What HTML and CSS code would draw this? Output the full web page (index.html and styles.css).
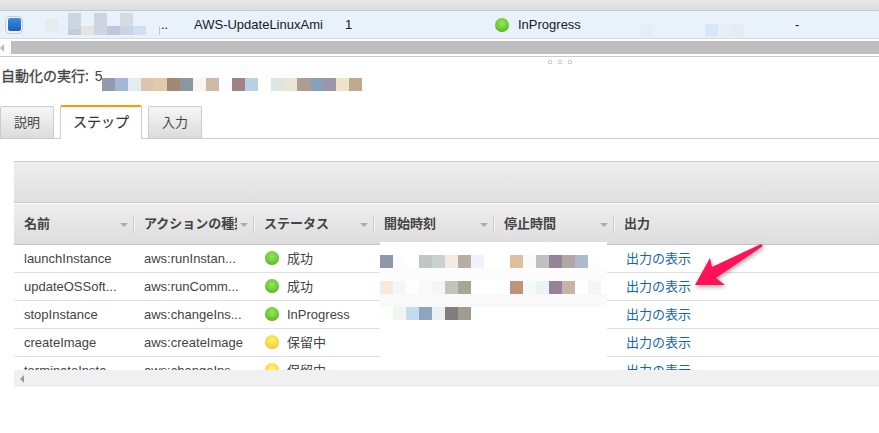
FILE: index.html
```html
<!DOCTYPE html>
<html lang="ja">
<head>
	<meta charset="UTF-8">
	<meta name="viewport" content="width=device-width, initial-scale=1.0">
	<title>自動化の実行</title>
	<link rel="stylesheet" href="styles.css">
</head>
<body>
	<div class="topband"></div>
	<div class="runrow">
		<span class="check"><span class="checkfill"></span></span>
		<span class="runcell runname">..</span>
		<span class="runcell rundoc">AWS-UpdateLinuxAmi</span>
		<span class="runcell runstep">1</span>
		<span class="runcell runstatus"><span class="ball green"></span>InProgress</span>
		<span class="runcell rundash">-</span>
	</div>
	<div class="topscroll">
		<span class="arrowleft"></span>
		<span class="topthumb"></span>
	</div>
	<div class="splitter">
		<span class="grip"></span>
		<span class="grip"></span>
		<span class="grip"></span>
	</div>
	<h2 class="runtitle">自動化の実行: <span class="runid">5</span></h2>
	<div class="tabs">
		<span class="tab">説明</span>
		<span class="tab activetab">ステップ</span>
		<span class="tab">入力</span>
	</div>
	<div class="panel">
		<div class="toolbar"></div>
		<div class="row headrow">
			<div class="headcell">名前<span class="caret"></span></div>
			<div class="headcell"><span class="headclip">アクションの種類</span><span class="caret"></span></div>
			<div class="headcell">ステータス<span class="caret"></span></div>
			<div class="headcell">開始時刻<span class="caret"></span></div>
			<div class="headcell">停止時間<span class="caret"></span></div>
			<div class="headcell lastcell">出力</div>
		</div>
		<div class="rows">
			<div class="row steprow">
				<div class="cell">launchInstance</div>
				<div class="cell">aws:runInstan...</div>
				<div class="cell statuscell"><span class="ball green"></span><span class="jatext">成功</span></div>
				<div class="cell"></div>
				<div class="cell"></div>
				<div class="cell"><a class="outlink" href="#">出力の表示</a></div>
			</div>
			<div class="row steprow">
				<div class="cell">updateOSSoft...</div>
				<div class="cell">aws:runComm...</div>
				<div class="cell statuscell"><span class="ball green"></span><span class="jatext">成功</span></div>
				<div class="cell"></div>
				<div class="cell"></div>
				<div class="cell"><a class="outlink" href="#">出力の表示</a></div>
			</div>
			<div class="row steprow">
				<div class="cell">stopInstance</div>
				<div class="cell">aws:changeIns...</div>
				<div class="cell statuscell"><span class="ball green"></span>InProgress</div>
				<div class="cell"></div>
				<div class="cell"></div>
				<div class="cell"><a class="outlink" href="#">出力の表示</a></div>
			</div>
			<div class="row steprow">
				<div class="cell">createImage</div>
				<div class="cell">aws:createImage</div>
				<div class="cell statuscell"><span class="ball yellow"></span><span class="jatext">保留中</span></div>
				<div class="cell"></div>
				<div class="cell"></div>
				<div class="cell"><a class="outlink" href="#">出力の表示</a></div>
			</div>
			<div class="row steprow">
				<div class="cell">terminateInsta</div>
				<div class="cell">aws:changeIns...</div>
				<div class="cell statuscell"><span class="ball yellow"></span><span class="jatext">保留中</span></div>
				<div class="cell"></div>
				<div class="cell"></div>
				<div class="cell"><a class="outlink" href="#">出力の表示</a></div>
			</div>
		</div>
		<div class="panelscroll"><span class="arrowleft darkarrow"></span></div>
	</div>

	<!-- blurred out values and the red arrow sit over the page -->
	<svg class="overlay" width="879" height="433" viewBox="0 0 879 433">
		<g>
			<rect x="45" y="19" width="13" height="13" fill="#e4ecef"/>
			<rect x="58" y="26" width="10" height="9" fill="#e4f0fb"/>
			<rect x="68" y="13" width="13" height="22" fill="#cdd5e0"/>
			<rect x="68" y="29" width="13" height="6" fill="#c4ccd8"/>
			<rect x="81" y="26" width="13" height="9" fill="#e2e5e2"/>
			<rect x="94" y="13" width="13" height="22" fill="#cdd5e0"/>
			<rect x="107" y="26" width="13" height="9" fill="#c0c5e0"/>
			<rect x="120" y="13" width="13" height="13" fill="#d5dbe5"/>
			<rect x="120" y="26" width="13" height="9" fill="#cdd2dc"/>
			<rect x="133" y="26" width="13" height="9" fill="#cfe0f5"/>
			<rect x="159" y="26" width="1" height="9" fill="#bcc8d8"/>
			<rect x="640" y="24" width="13" height="13" fill="#e5eef8"/>
			<rect x="705" y="24" width="13" height="13" fill="#d5e7f8"/>
			<rect x="718" y="24" width="13" height="13" fill="#e6eff9"/>
			<rect x="731" y="24" width="13" height="13" fill="#e4ecf0"/>
		</g>
		<g>
			<rect x="102" y="65" width="260" height="13" fill="#fdfdfd"/>
			<rect x="102" y="78" width="13" height="13" fill="#9499ae"/>
			<rect x="115" y="78" width="13" height="13" fill="#a3b8d4"/>
			<rect x="128" y="78" width="13" height="13" fill="#e4ecf0"/>
			<rect x="141" y="78" width="13" height="13" fill="#dcc5b0"/>
			<rect x="154" y="78" width="13" height="13" fill="#e4cba8"/>
			<rect x="167" y="78" width="13" height="13" fill="#a38974"/>
			<rect x="180" y="78" width="13" height="13" fill="#8b95a4"/>
			<rect x="193" y="78" width="13" height="13" fill="#fbf5ef"/>
			<rect x="206" y="78" width="13" height="13" fill="#cfb9a7"/>
			<rect x="219" y="78" width="13" height="13" fill="#fafcff"/>
			<rect x="232" y="78" width="13" height="13" fill="#a18385"/>
			<rect x="245" y="78" width="13" height="13" fill="#b8d0e4"/>
			<rect x="258" y="78" width="13" height="13" fill="#fefff9"/>
			<rect x="271" y="78" width="13" height="13" fill="#dde6e3"/>
			<rect x="284" y="78" width="13" height="13" fill="#e9e6d8"/>
			<rect x="297" y="78" width="13" height="13" fill="#b09c92"/>
			<rect x="310" y="78" width="13" height="13" fill="#8a9fb8"/>
			<rect x="323" y="78" width="13" height="13" fill="#9b96a8"/>
			<rect x="336" y="78" width="13" height="13" fill="#f1e3cb"/>
			<rect x="349" y="78" width="13" height="13" fill="#bfaa90"/>
		</g>
		<g>
			<rect x="380" y="242" width="227" height="128" fill="#ffffff"/>
			<rect x="380" y="268" width="227" height="13" fill="#fcfcfc"/>
			<rect x="380" y="294" width="227" height="13" fill="#f9f9f9"/>
			<rect x="380" y="255" width="13" height="13" fill="#8e98a8"/>
			<rect x="393" y="255" width="13" height="13" fill="#f9fdff"/>
			<rect x="419" y="255" width="13" height="13" fill="#c2c4c6"/>
			<rect x="432" y="255" width="13" height="13" fill="#c9d2cf"/>
			<rect x="445" y="255" width="13" height="13" fill="#f3ebe4"/>
			<rect x="458" y="255" width="13" height="13" fill="#b7ada2"/>
			<rect x="471" y="255" width="13" height="13" fill="#eff4fc"/>
			<rect x="510" y="255" width="13" height="13" fill="#dfbf9d"/>
			<rect x="523" y="255" width="13" height="13" fill="#f6fbfe"/>
			<rect x="536" y="255" width="13" height="13" fill="#c0c0c0"/>
			<rect x="549" y="255" width="13" height="13" fill="#938499"/>
			<rect x="562" y="255" width="13" height="13" fill="#b2a6a6"/>
			<rect x="575" y="255" width="13" height="13" fill="#adbccb"/>
			<rect x="588" y="255" width="13" height="13" fill="#fbfdff"/>
			<rect x="380" y="281" width="13" height="13" fill="#f6eadb"/>
			<rect x="393" y="281" width="13" height="13" fill="#f3f7fb"/>
			<rect x="406" y="281" width="13" height="13" fill="#fbffff"/>
			<rect x="419" y="281" width="13" height="13" fill="#f9f9f9"/>
			<rect x="432" y="281" width="13" height="13" fill="#f2f6f9"/>
			<rect x="445" y="281" width="13" height="13" fill="#c6c1ba"/>
			<rect x="458" y="281" width="13" height="13" fill="#a6a697"/>
			<rect x="510" y="281" width="13" height="13" fill="#bd9479"/>
			<rect x="523" y="281" width="13" height="13" fill="#f4f8fb"/>
			<rect x="536" y="281" width="13" height="13" fill="#ebf2f4"/>
			<rect x="549" y="281" width="13" height="13" fill="#938499"/>
			<rect x="562" y="281" width="13" height="13" fill="#c6b4a5"/>
			<rect x="588" y="281" width="13" height="13" fill="#f3f7fb"/>
			<rect x="380" y="307" width="13" height="13" fill="#fdfffd"/>
			<rect x="393" y="307" width="13" height="13" fill="#f0f5ee"/>
			<rect x="406" y="307" width="13" height="13" fill="#c5dcf0"/>
			<rect x="419" y="307" width="13" height="13" fill="#8da5be"/>
			<rect x="432" y="307" width="13" height="13" fill="#ebf1f1"/>
			<rect x="445" y="307" width="13" height="13" fill="#807f7c"/>
			<rect x="458" y="307" width="13" height="13" fill="#a09d90"/>
		</g>
		<polygon class="redarrow" points="761,244 763,246 716,278 725,285 695,285 710,258 712,267" fill="#ff1258"/>
	</svg>
</body>
</html>
```

FILE: styles.css
```css
html, body{
	margin: 0;
	height: 100%;
	overflow: hidden;
	background: #fff;
}
body{
	position: relative;
	font-family: "Liberation Sans", "Noto Sans CJK JP", sans-serif;
	font-size: 13px;
	color: #444;
}

/* selected run at the top */
.topband{
	height: 10px;
	background: linear-gradient(#e6e6e6, #dedede);
	border-bottom: 1px solid #c8c8c8;
}
.runrow{
	display: flex;
	align-items: center;
	height: 27px;
	background: #e9f1fb;
	border-bottom: 1px solid #d8d8d8;
	color: #16191f;
}
.check{
	display: flex;
	align-items: center;
	justify-content: center;
	box-sizing: border-box;
	width: 18px;
	height: 18px;
	margin-left: 5px;
	background: #f4f6f9;
	border: 1px solid #c9c9c9;
	border-radius: 5px;
}
.checkfill{
	width: 13px;
	height: 13px;
	border-radius: 2px;
	background: linear-gradient(#3b8de2, #1b60ba);
}
.runcell{
	display: flex;
	align-items: center;
	flex: none;
}
.runname{
	width: 33px;
	margin-left: 138px;
}
.rundoc{
	width: 151px;
}
.runstep{
	width: 150px;
}
.runstatus{
	width: 300px;
}
.ball{
	flex: none;
	display: inline-block;
	box-sizing: border-box;
	width: 14px;
	height: 14px;
	margin-right: 9px;
	border-radius: 50%;
}
.green{
	background: radial-gradient(circle at 50% 38%, #98e45c 0%, #6ccb33 55%, #339012 100%);
}
.yellow{
	background: radial-gradient(circle at 50% 38%, #fff07a 0%, #ffd83c 55%, #e8960f 100%);
}

.topscroll{
	display: flex;
	align-items: center;
	height: 17px;
	border-bottom: 1px solid #ccc;
}
.topthumb{
	flex: 1;
	height: 13px;
	margin-left: 7px;
	background: #bebebe;
}
.arrowleft{
	width: 0;
	height: 0;
	border-top: 4px solid transparent;
	border-bottom: 4px solid transparent;
	border-right: 4px solid #bbb;
}
.darkarrow{
	border-right-color: #999;
	margin-left: 6px;
}

.splitter{
	display: flex;
	gap: 6px;
	height: 6px;
	padding: 3px 0 0 548px;
}
.grip{
	box-sizing: border-box;
	width: 4px;
	height: 4px;
	border: 1px solid #ccc;
	border-radius: 1px 1px 0 0;
}

.runtitle{
	margin: 0;
	padding-left: 1px;
	height: 20px;
	line-height: 20px;
	font-size: 14px;
	font-weight: normal;
	-webkit-text-stroke: 0.3px #444;
}
.runid{
	margin-left: 2px;
	font-size: 14px;
	-webkit-text-stroke: 0;
}

.tabs{
	display: flex;
	align-items: flex-end;
	gap: 6px;
	height: 33px;
	margin-top: 19px;
	border-bottom: 1px solid #ccc;
}
.tab{
	box-sizing: border-box;
	display: flex;
	align-items: center;
	justify-content: center;
	width: 54px;
	height: 32px;
	padding-bottom: 3px;
	background: linear-gradient(#f6f6f6, #dcdcdc);
	border: 1px solid #ccc;
	border-bottom: 0;
	border-radius: 2px 2px 0 0;
}
.activetab{
	width: 82px;
	height: 34px;
	margin-bottom: -1px;
	padding-bottom: 4px;
	background: #fff;
	border-top: 2px solid #f90;
	font-size: 14px;
	-webkit-text-stroke: 0.2px #333;
	color: #333;
}

.panel{
	margin: 22px 0 0 14px;
}
.toolbar{
	height: 40px;
	background: linear-gradient(#eeeeee, #e0e0e0);
	border-top: 1px solid #ccc;
	border-bottom: 1px solid #ccc;
}
.row{
	display: grid;
	grid-template-columns: repeat(5, 120px) 1fr;
}
.headrow{
	height: 40px;
	background: linear-gradient(#eeeeee, #dddddd);
	border-top: 1px solid #f6f6f6;
	border-bottom: 1px solid #c4c4c4;
}
.headcell{
	position: relative;
	display: flex;
	align-items: center;
	padding: 0 0 3px 10px;
	font-weight: bold;
	white-space: nowrap;
}
.headcell::after{
	content: "";
	position: absolute;
	right: 0;
	top: 11px;
	height: 18px;
	width: 1px;
	background: #ccc;
	box-shadow: 1px 0 0 #f4f4f4;
}
.lastcell::after{
	display: none;
}
.headclip{
	display: block;
	width: 93px;
	overflow: hidden;
}
.caret{
	position: absolute;
	left: 106px;
	top: 19px;
	width: 0;
	height: 0;
	border-left: 4px solid transparent;
	border-right: 4px solid transparent;
	border-top: 4px solid #aaa;
}
.rows{
	height: 125px;
	overflow: hidden;
}
.steprow{
	height: 27px;
	border-bottom: 1px solid #e0e0e0;
}
.cell{
	display: flex;
	align-items: center;
	padding-left: 10px;
	white-space: nowrap;
	overflow: hidden;
}
.statuscell{
	padding-left: 11px;
}
.statuscell .ball{
	margin: 0 8px 1px 0;
}
.jatext{
	padding-bottom: 2px;
}
.outlink{
	margin: 0 0 2px 2px;
	color: #1166bb;
	text-decoration: none;
}
.panelscroll{
	display: flex;
	align-items: center;
	height: 17px;
	background: #f0f0f0;
}

.overlay{
	position: absolute;
	top: 0;
	left: 0;
	pointer-events: none;
}
.redarrow{
	filter: drop-shadow(1px 2px 2px rgba(0, 0, 0, 0.35));
}
```
